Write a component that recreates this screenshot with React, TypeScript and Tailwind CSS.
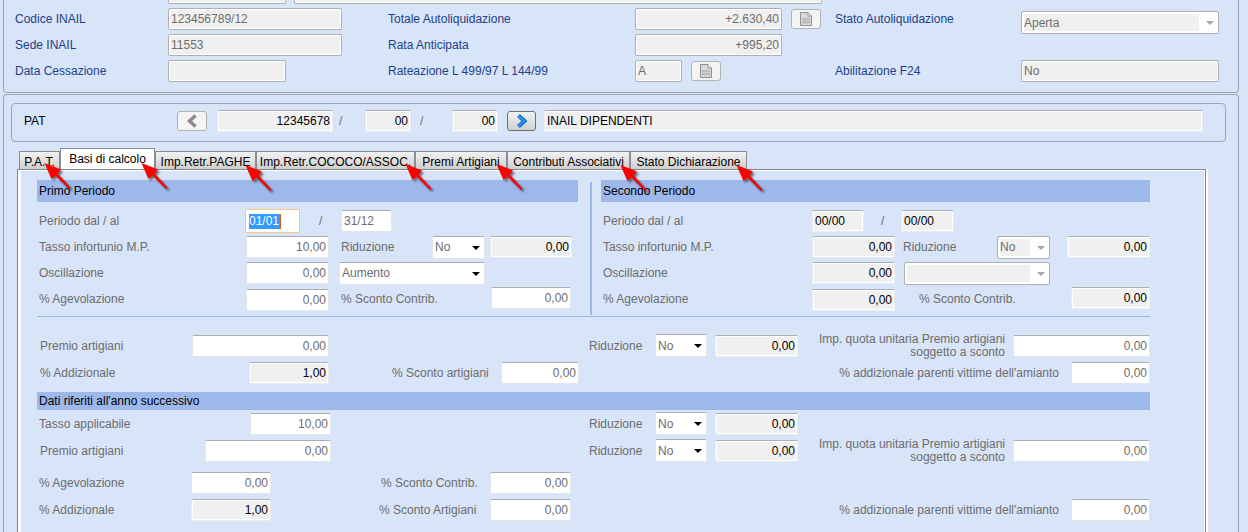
import type { ReactNode } from "react";

type FieldKind = "edit" | "read" | "off";

const fieldKinds: Record<FieldKind, string> = {
  edit: "border-[#e2e5ea] border-t-[#abadb3] bg-white text-[#6d6d6d]",
  read: "border-[#e9ebee] border-t-[#abadb3] bg-[#f0f0f0] text-black shadow-[inset_0_0_0_1px_#ffffff]",
  off: "border-[#afafaf] bg-[#f0f0f0] text-[#6d6d6d] shadow-[inset_0_0_0_1px_#ffffff]",
};

function Field({
  label,
  value,
  kind = "edit",
  size,
  right = true,
}: {
  label: string;
  value: string;
  kind?: FieldKind;
  size: string;
  right?: boolean;
}) {
  return (
    <input
      aria-label={label}
      defaultValue={value}
      readOnly={kind !== "edit"}
      className={`block h-[22px] min-w-0 rounded-[2px] border px-[2px] outline-none ${right ? "text-right" : "text-left"} ${fieldKinds[kind]} ${size}`}
    />
  );
}

function Pick({
  label,
  value,
  off = false,
  size,
}: {
  label: string;
  value: string;
  off?: boolean;
  size: string;
}) {
  return (
    <div
      className={`relative h-[23px] rounded-[2px] border bg-white ${off ? "border-[#afafaf] py-[2px] pr-[19px] pl-[2px]" : "border-[#e2e5ea] border-t-[#abadb3]"} ${size}`}
    >
      <select
        aria-label={label}
        disabled={off}
        className={`block h-full w-full appearance-none text-[#6d6d6d] opacity-100 outline-none ${off ? "bg-[#f0f0f0]" : "bg-white pl-[2px]"}`}
      >
        <option>{value}</option>
      </select>
      <svg
        viewBox="0 0 8 4"
        className={`pointer-events-none absolute top-[9px] right-1 h-1 w-2 ${off ? "fill-[#a6a6a6]" : "fill-black"}`}
      >
        <path d="M0 0h8L4 4z" />
      </svg>
    </div>
  );
}

function Line({ children, tall = false }: { children: ReactNode; tall?: boolean }) {
  return <div className={`flex items-center ${tall ? "h-[27px]" : "h-6"}`}>{children}</div>;
}

function DocButton({ label }: { label: string }) {
  return (
    <button
      aria-label={label}
      className="ml-[9px] flex h-5 w-[30px] items-center justify-center rounded-[3px] border border-[#adb2b5] bg-[#f4f4f4]"
    >
      <svg viewBox="0 0 12 14" className="h-[14px] w-3">
        <path d="M.5.5h7.500l3.500 3.500v9.500H.5z" fill="#d9d9d9" stroke="#909090" />
        <path d="M8 .5V4h3.500" fill="#f4f4f4" stroke="#909090" />
        <path d="M2 6h8v5.500H2z" fill="#bcbcbc" />
        <path d="M2 8.500h8" stroke="#d0d0d0" />
      </svg>
    </button>
  );
}

function Pointer({ place }: { place: string }) {
  return (
    <svg
      viewBox="0 0 30 32"
      className={`pointer-events-none absolute z-10 h-8 w-[30px] drop-shadow-[2px_2px_1px_rgba(0,0,0,0.55)] ${place}`}
    >
      <path d="M.5 1L17 7.500L13.500 11.500L26.500 25.500L25 27L11.500 13.500L7.500 17z" fill="#fe0000" />
    </svg>
  );
}

const tabs = [
  { name: "P.A.T.", size: "w-[41px]", place: "top-[11px] left-[25px]" },
  { name: "Basi di calcolo", size: "w-[95px]", place: "top-[14px] left-[81px]", active: true },
  { name: "Imp.Retr.PAGHE", size: "w-[101px]", place: "top-[13px] left-[90px]" },
  { name: "Imp.Retr.COCOCO/ASSOC.", size: "w-[159px]", place: "top-[12px] left-[149px]" },
  { name: "Premi Artigiani", size: "w-[92px]", place: "top-[12px] left-[81px]" },
  { name: "Contributi Associativi", size: "w-[123px]", place: "top-[13px] left-[113px]" },
  { name: "Stato Dichiarazione", size: "w-[117px]", place: "top-[13px] left-[106px]" },
];

function Tabs() {
  return (
    <div role="tablist" className="ml-[15px] flex h-5 items-end">
      {tabs.map((t) => (
        <div key={t.name} className={`relative shrink-0 ${t.size}`}>
          <button
            role="tab"
            aria-selected={!!t.active}
            className={`block w-full overflow-hidden border border-b-0 border-[#898c95] whitespace-nowrap text-black ${t.active ? "h-[21px] bg-white" : "h-[18px] bg-linear-to-b from-[#f2f2f2] to-[#cfcfcf] pt-[2px]"}`}
          >
            {t.name}
          </button>
          <Pointer place={t.place} />
        </div>
      ))}
    </div>
  );
}

function Heading({ children, size }: { children: ReactNode; size: string }) {
  return <h2 className={`flex items-center bg-[#9db8eb] pl-[2px] text-black ${size}`}>{children}</h2>;
}

function Reduction() {
  return (
    <div className="flex items-center">
      <span className="w-[66px]">Riduzione</span>
      <Pick label="Riduzione" value="No" size="w-[52px]" />
      <div className="ml-2">
        <Field label="Valore riduzione" value="0,00" kind="read" size="w-[83px]" />
      </div>
    </div>
  );
}

function UnitShare() {
  return (
    <div className="ml-auto flex items-center gap-2">
      <span className="text-right leading-[13px]">
        Imp. quota unitaria Premio artigiani
        <br />
        soggetto a sconto
      </span>
      <Field label="Imp. quota unitaria Premio artigiani soggetto a sconto" value="0,00" size="w-[137px]" />
    </div>
  );
}

function Asbestos() {
  return (
    <div className="ml-auto flex items-center gap-3">
      <span>% addizionale parenti vittime dell'amianto</span>
      <Field label="% addizionale parenti vittime dell'amianto" value="0,00" size="w-[79px]" />
    </div>
  );
}

function Summary() {
  return (
    <section className="mr-[9px] ml-[3px] rounded-b-[4px] border border-t-0 border-[#a0a6b0] pr-[19px] pb-[10px] pl-[11px] text-[#1d4289]">
      <div className="-mt-[18px] flex gap-2 pl-[153px]">
        <Field label="Codice" value="" kind="off" size="w-[118px]" />
        <Field label="Descrizione" value="" kind="off" size="w-[528px]" />
      </div>
      <div className="mt-1 flex">
        <div className="flex w-[373px] flex-col gap-1">
          <label className="flex items-center">
            <span className="w-[153px]">Codice INAIL</span>
            <Field label="Codice INAIL" value="123456789/12" kind="off" size="w-[174px]" right={false} />
          </label>
          <label className="flex items-center">
            <span className="w-[153px]">Sede INAIL</span>
            <Field label="Sede INAIL" value="11553" kind="off" size="w-[174px]" right={false} />
          </label>
          <label className="flex items-center">
            <span className="w-[153px]">Data Cessazione</span>
            <Field label="Data Cessazione" value="" kind="off" size="w-[118px]" right={false} />
          </label>
        </div>
        <div className="flex w-[447px] flex-col gap-1">
          <div className="flex items-center">
            <span className="w-[247px]">Totale Autoliquidazione</span>
            <Field label="Totale Autoliquidazione" value="+2.630,40" kind="off" size="w-[147px]" />
            <DocButton label="Dettaglio totale" />
          </div>
          <div className="flex items-center">
            <span className="w-[247px]">Rata Anticipata</span>
            <Field label="Rata Anticipata" value="+995,20" kind="off" size="w-[147px]" />
          </div>
          <div className="flex items-center">
            <span className="w-[247px]">Rateazione L 499/97 L 144/99</span>
            <Field label="Rateazione" value="A" kind="off" size="w-[47px]" right={false} />
            <DocButton label="Dettaglio rateazione" />
          </div>
        </div>
        <div className="flex flex-1 flex-col justify-between">
          <div className="flex items-start">
            <span className="w-[186px] leading-[22px]">Stato Autoliquidazione</span>
            <div className="flex-1 pt-[3px]">
              <Pick label="Stato Autoliquidazione" value="Aperta" off size="w-full" />
            </div>
          </div>
          <label className="flex items-center">
            <span className="w-[186px]">Abilitazione F24</span>
            <Field label="Abilitazione F24" value="No" kind="off" size="flex-1" right={false} />
          </label>
        </div>
      </div>
    </section>
  );
}

function PatBar() {
  return (
    <div className="mt-2 mr-3 ml-[7px] flex h-[39px] items-center rounded-[4px] border border-[#a0a6b0] pr-[22px] pb-[3px] pl-3 text-black">
      <span className="w-[153px]">PAT</span>
      <button
        aria-label="Precedente"
        className="flex h-5 w-[30px] items-center justify-center rounded-[3px] border border-[#adb2b5] bg-[#f4f4f4]"
      >
        <svg viewBox="0 0 12 14" className="h-[14px] w-3">
          <path d="M9.500 1.500L3.500 7l6 5.500" fill="none" stroke="#8a8a8a" strokeWidth="3.500" />
        </svg>
      </button>
      <div className="ml-[10px] flex items-center">
        <Field label="PAT numero" value="12345678" kind="read" size="w-[116px]" />
        <span className="w-8 pl-[6px] text-[#6d6d6d]">/</span>
        <Field label="PAT progressivo" value="00" kind="read" size="w-[46px]" />
        <span className="w-[41px] pl-[9px] text-[#6d6d6d]">/</span>
        <Field label="PAT sottonumero" value="00" kind="read" size="w-[46px]" />
      </div>
      <button
        aria-label="Successivo"
        className="mr-2 ml-[9px] flex h-5 w-[29px] items-center justify-center rounded-[3px] border border-[#707070] bg-linear-to-b from-[#f2f2f2] to-[#cfcfcf]"
      >
        <svg viewBox="0 0 12 14" className="h-[14px] w-3">
          <path d="M2.500 1.500L8.500 7l-6 5.500" fill="none" stroke="#1565c4" strokeWidth="4" />
          <path d="M2.500 1.500L8.500 7l-6 5.500" fill="none" stroke="#2f93f5" strokeWidth="2" />
        </svg>
      </button>
      <Field label="PAT descrizione" value="INAIL DIPENDENTI" kind="read" size="flex-1" right={false} />
    </div>
  );
}

function FirstPeriod() {
  return (
    <div className="w-[541px]">
      <Heading size="h-[22px]">Primo Periodo</Heading>
      <div className="mt-[7px] flex flex-col gap-[2px] pl-[2px]">
        <Line>
          <span className="w-[206px]">Periodo dal / al</span>
          <div className="flex h-6 w-[55px] items-center rounded-[1px] border border-[#f0c987] bg-white px-[3px]">
            <input
              aria-label="Periodo dal"
              defaultValue="01/01"
              className="block h-[15px] w-8 border-r border-[#c8641e] bg-[#3399ff] text-white outline-none"
            />
          </div>
          <span className="w-[41px] pl-[19px]">/</span>
          <Field label="Periodo al" value="31/12" size="w-[51px]" right={false} />
        </Line>
        <Line>
          <span className="w-[207px]">Tasso infortunio M.P.</span>
          <Field label="Tasso infortunio M.P." value="10,00" size="w-[83px]" />
          <span className="ml-3 w-[91px]">Riduzione</span>
          <Pick label="Riduzione" value="No" size="w-[53px]" />
          <div className="ml-[5px]">
            <Field label="Valore riduzione" value="0,00" kind="read" size="w-[82px]" />
          </div>
        </Line>
        <Line>
          <span className="w-[207px]">Oscillazione</span>
          <Field label="Oscillazione" value="0,00" size="w-[83px]" />
          <div className="ml-[10px]">
            <Pick label="Tipo oscillazione" value="Aumento" size="w-[146px]" />
          </div>
        </Line>
        <Line>
          <span className="w-[207px]">% Agevolazione</span>
          <div className="self-end">
            <Field label="% Agevolazione" value="0,00" size="w-[83px]" />
          </div>
          <span className="ml-3 w-[150px]">% Sconto Contrib.</span>
          <div className="self-start">
            <Field label="% Sconto Contrib." value="0,00" size="w-20" />
          </div>
        </Line>
      </div>
    </div>
  );
}

function SecondPeriod() {
  return (
    <div className="flex-1">
      <Heading size="h-[22px]">Secondo Periodo</Heading>
      <div className="mt-[7px] flex flex-col gap-[2px] pl-[2px]">
        <Line>
          <span className="w-[209px]">Periodo dal / al</span>
          <Field label="Secondo periodo dal" value="00/00" kind="read" size="w-[52px]" right={false} />
          <span className="w-[37px] pl-[17px]">/</span>
          <Field label="Secondo periodo al" value="00/00" kind="read" size="w-[53px]" right={false} />
        </Line>
        <Line>
          <span className="w-[209px]">Tasso infortunio M.P.</span>
          <Field label="Tasso infortunio M.P." value="0,00" kind="read" size="w-[83px]" />
          <span className="ml-2 w-[94px]">Riduzione</span>
          <Pick label="Riduzione" value="No" off size="w-[53px]" />
          <div className="ml-auto">
            <Field label="Valore riduzione" value="0,00" kind="read" size="w-[83px]" />
          </div>
        </Line>
        <Line>
          <span className="w-[209px]">Oscillazione</span>
          <Field label="Oscillazione" value="0,00" kind="read" size="w-[83px]" />
          <div className="ml-[9px]">
            <Pick label="Tipo oscillazione" value="" off size="w-[146px]" />
          </div>
        </Line>
        <Line>
          <span className="w-[209px]">% Agevolazione</span>
          <div className="self-end">
            <Field label="% Agevolazione" value="0,00" kind="read" size="w-[83px]" />
          </div>
          <span className="ml-6">% Sconto Contrib.</span>
          <div className="ml-auto self-start">
            <Field label="% Sconto Contrib." value="0,00" kind="read" size="w-[79px]" />
          </div>
        </Line>
      </div>
    </div>
  );
}

function Premiums() {
  return (
    <div className="mt-[15px] flex flex-col">
      <Line tall>
        <div className="flex w-[552px] items-center pl-[3px]">
          <span className="w-[152px]">Premio artigiani</span>
          <Field label="Premio artigiani" value="0,00" size="w-[137px]" />
        </div>
        <Reduction />
        <UnitShare />
      </Line>
      <Line tall>
        <div className="flex items-center pl-[3px]">
          <span className="w-[209px]">% Addizionale</span>
          <Field label="% Addizionale" value="1,00" kind="read" size="w-20" />
          <span className="ml-[63px] w-[109px]">% Sconto artigiani</span>
          <Field label="% Sconto artigiani" value="0,00" size="w-[78px]" />
        </div>
        <Asbestos />
      </Line>
    </div>
  );
}

function NextYear() {
  return (
    <div className="mt-[6px]">
      <Heading size="h-[18px]">Dati riferiti all'anno successivo</Heading>
      <div className="flex flex-col">
        <Line tall>
          <div className="flex w-[552px] items-center pl-[2px]">
            <span className="w-[211px]">Tasso applicabile</span>
            <Field label="Tasso applicabile" value="10,00" size="w-[81px]" />
          </div>
          <Reduction />
        </Line>
        <Line tall>
          <div className="flex w-[552px] items-center pl-[3px]">
            <span className="w-[165px]">Premio artigiani</span>
            <Field label="Premio artigiani" value="0,00" size="w-[126px]" />
          </div>
          <Reduction />
          <UnitShare />
        </Line>
      </div>
      <div className="mt-[5px] flex flex-col">
        <Line tall>
          <div className="flex items-center pl-[2px]">
            <span className="w-[152px]">% Agevolazione</span>
            <Field label="% Agevolazione" value="0,00" size="w-20" />
            <span className="ml-[110px] w-[109px]">% Sconto Contrib.</span>
            <Field label="% Sconto Contrib." value="0,00" size="w-[81px]" />
          </div>
        </Line>
        <Line tall>
          <div className="flex items-center pl-[2px]">
            <span className="w-[152px]">% Addizionale</span>
            <Field label="% Addizionale" value="1,00" kind="read" size="w-20" />
            <span className="ml-[108px] w-[111px]">% Sconto Artigiani</span>
            <Field label="% Sconto Artigiani" value="0,00" size="w-[81px]" />
          </div>
          <Asbestos />
        </Line>
      </div>
    </div>
  );
}

export default function App() {
  return (
    <main className="flex min-h-screen min-w-[1200px] flex-col overflow-hidden bg-[#d8e4f8] font-['Liberation_Sans',Arial,sans-serif] text-[12px] leading-4 text-[#6d6d6d]">
      <Summary />
      <section className="mt-px mr-[9px] ml-[3px] flex flex-1 flex-col rounded-t-[4px] border border-b-0 border-[#a0a6b0]">
        <PatBar />
        <div className="mt-[7px]">
          <Tabs />
        </div>
        <div className="mr-8 ml-[13px] flex flex-1 flex-col border border-b-0 border-[#80848e] shadow-[2px_0_0_0_#ffffff]">
          <div className="flex-1 border-t border-r border-l-[3px] border-white pt-[9px] pr-[54px] pl-4">
            <div className="flex border-b border-[#9db8eb] pb-[5px]">
              <FirstPeriod />
              <div className="mx-3 mt-[2px] mr-[9px] -mb-1 w-[2px] bg-[#9db8eb]" />
              <SecondPeriod />
            </div>
            <Premiums />
            <NextYear />
          </div>
        </div>
      </section>
    </main>
  );
}
